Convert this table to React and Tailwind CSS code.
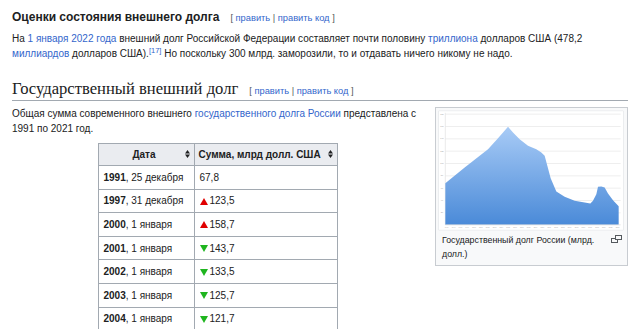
import React from 'react';

const rows = [
  { year: '1991', day: '25 декабря', value: '67,8', trend: null },
  { year: '1997', day: '31 декабря', value: '123,5', trend: 'up' },
  { year: '2000', day: '1 января', value: '158,7', trend: 'up' },
  { year: '2001', day: '1 января', value: '143,7', trend: 'down' },
  { year: '2002', day: '1 января', value: '133,5', trend: 'down' },
  { year: '2003', day: '1 января', value: '125,7', trend: 'down' },
  { year: '2004', day: '1 января', value: '121,7', trend: 'down' },
];

const EditLinks = () => (
  <span
    className="ml-[11px] whitespace-nowrap text-[9.3px] text-[#54595d]"
    style={{ fontFamily: '"Liberation Sans", Arial, sans-serif' }}
  >
    [ <span className="text-[#3366cc]">править</span> | <span className="text-[#3366cc]">править код</span> ]
  </span>
);

const SortIcon = () => (
  <svg width="5" height="8" viewBox="0 0 5 8" className="shrink-0">
    <path d="M2.5 0 L5 3.4 L0 3.4 Z" fill="#202122" />
    <path d="M0 4.6 L5 4.6 L2.5 8 Z" fill="#202122" />
  </svg>
);

const Trend = ({ dir }) =>
  dir === 'up' ? (
    <svg width="8" height="7" viewBox="0 0 8 7" className="mr-[2px] inline-block align-[-0.5px]">
      <path d="M4 0 L8 7 L0 7 Z" fill="#e00000" />
    </svg>
  ) : (
    <svg width="8" height="7" viewBox="0 0 8 7" className="mr-[2px] inline-block align-[-0.5px]">
      <path d="M0 0 L8 0 L4 7 Z" fill="#1fb51f" />
    </svg>
  );

// chart drawn in the same 3x units as the reference crop
const areaPoints =
  '62,372 62,247 120,200 190,145 220,112 250,78 265,95 285,115 310,135 335,145 350,155 360,165 368,195 378,232 395,272 420,288 450,300 480,305 497,308 505,300 515,280 520,258 530,257 540,260 550,278 565,298 582,316 582,372';

const Chart = () => {
  const grid = [40, 77, 114, 151, 188, 225, 262, 299, 336];
  const years = Array.from({ length: 26 }, (_, i) => 1996 + i);
  return (
    <svg width="186" height="121" viewBox="40 28 558 362" className="block bg-white">
      <defs>
        <linearGradient id="debt" x1="0" y1="0" x2="0" y2="1">
          <stop offset="0%" stopColor="#a8cbf6" />
          <stop offset="100%" stopColor="#4a8ad8" />
        </linearGradient>
      </defs>
      <rect x="42" y="30" width="554" height="358" fill="white" stroke="#e2e4e8" strokeWidth="2" />
      {grid.map((y) => (
        <line key={y} x1="62" x2="588" y1={y} y2={y} stroke="#e6e6e6" strokeWidth="2" />
      ))}
      <line x1="62" x2="62" y1="36" y2="372" stroke="#e0e0e0" strokeWidth="2" />
      <polygon points={areaPoints} fill="url(#debt)" />
      <line x1="62" x2="588" y1="372" y2="372" stroke="#d8d8d8" strokeWidth="2" />
      {grid.map((y, i) => (
        <text key={'l' + y} x="52" y={y + 2} fontSize="6" fill="#999" textAnchor="middle">
          {(9 - i) * 20}
        </text>
      ))}
      {years.map((yr, i) => (
        <text key={yr} x={66 + i * 20.5} y="382" fontSize="5" fill="#aaa" textAnchor="middle">
          {yr}
        </text>
      ))}
    </svg>
  );
};

export default function App() {
  return (
    <div
      className="w-[640px] h-[329px] overflow-hidden bg-white text-[#202122] pl-[12px] pr-[12px]"
      style={{ fontFamily: '"Liberation Sans", Arial, sans-serif' }}
    >
      {/* Section heading */}
      <div className="flex items-baseline pt-[8px]">
        <h3 className="text-[12px] font-bold leading-[18px]">Оценки состояния внешнего долга</h3>
        <EditLinks />
      </div>
      <p className="mt-[5px] whitespace-nowrap text-[10px] leading-[15px]">
        На <span className="text-[#3366cc]">1 января 2022 года</span> внешний долг Российской Федерации составляет почти
        половину <span className="text-[#3366cc]">триллиона</span> долларов США (478,2
        <br />
        <span className="text-[#3366cc]">миллиардов</span> долларов США).
        <sup className="text-[7.5px] text-[#3366cc]">[17]</sup> Но поскольку 300 млрд. заморозили, то и отдавать ничего
        никому не надо.
      </p>

      {/* H2 */}
      <div className="mt-[18px] flex items-baseline border-b border-[#a2a9b1] pb-[1px]">
        <h2
          className="text-[16.6px] leading-[19px]"
          style={{ fontFamily: '"Liberation Serif", "Times New Roman", serif' }}
        >
          Государственный внешний долг
        </h2>
        <EditLinks />
      </div>

      <div className="flex gap-[12px] pt-[5px]">
        <div className="flex-1">
          <p className="whitespace-nowrap text-[10px] leading-[15px]">
            Общая сумма современного внешнего{' '}
            <span className="text-[#3366cc]">государственного долга России</span> представлена с
            <br />
            1991 по 2021 год.
          </p>
          <table className="mx-auto mt-[7px] table-fixed border-collapse text-[10px]">
            <colgroup>
              <col className="w-[96px]" />
              <col className="w-[143px]" />
            </colgroup>
            <thead>
              <tr className="bg-[#eaecf0]">
                <th className="h-[22px] border border-[#a2a9b1] pl-[5px] pr-[4px] font-bold">
                  <div className="flex items-center">
                    <span className="flex-1 text-center">Дата</span>
                    <SortIcon />
                  </div>
                </th>
                <th className="h-[22px] border border-[#a2a9b1] pl-[4px] pr-[4px] font-bold">
                  <div className="flex items-center justify-between whitespace-nowrap">
                    <span>Сумма, млрд долл. США</span>
                    <SortIcon />
                  </div>
                </th>
              </tr>
            </thead>
            <tbody>
              {rows.map((r) => (
                <tr key={r.year + r.day}>
                  <td className="h-[23.6px] whitespace-nowrap border border-[#a2a9b1] px-[5px]">
                    <b>{r.year}</b>, {r.day}
                  </td>
                  <td className="h-[23.6px] whitespace-nowrap border border-[#a2a9b1] px-[5px]">
                    {r.trend && <Trend dir={r.trend} />}
                    {r.value}
                  </td>
                </tr>
              ))}
            </tbody>
          </table>
        </div>

        {/* Thumbnail */}
        <div className="mt-[1px] w-[193px] shrink-0 self-start border border-[#c8ccd1] bg-[#f8f9fa] p-[2px]">
          <Chart />
          <div className="relative pl-[4px] pr-[16px] pt-[2px] pb-[2px] text-[8.8px] leading-[14px]">
            <svg width="11" height="8" viewBox="0 0 11 8" className="absolute right-[3px] top-[4px]">
              <rect x="0.5" y="3.5" width="6" height="4" fill="none" stroke="#54595d" />
              <rect x="4.5" y="0.5" width="6" height="4" fill="#f8f9fa" stroke="#54595d" />
            </svg>
            Государственный долг России (млрд. долл.)
          </div>
        </div>
      </div>
    </div>
  );
}
